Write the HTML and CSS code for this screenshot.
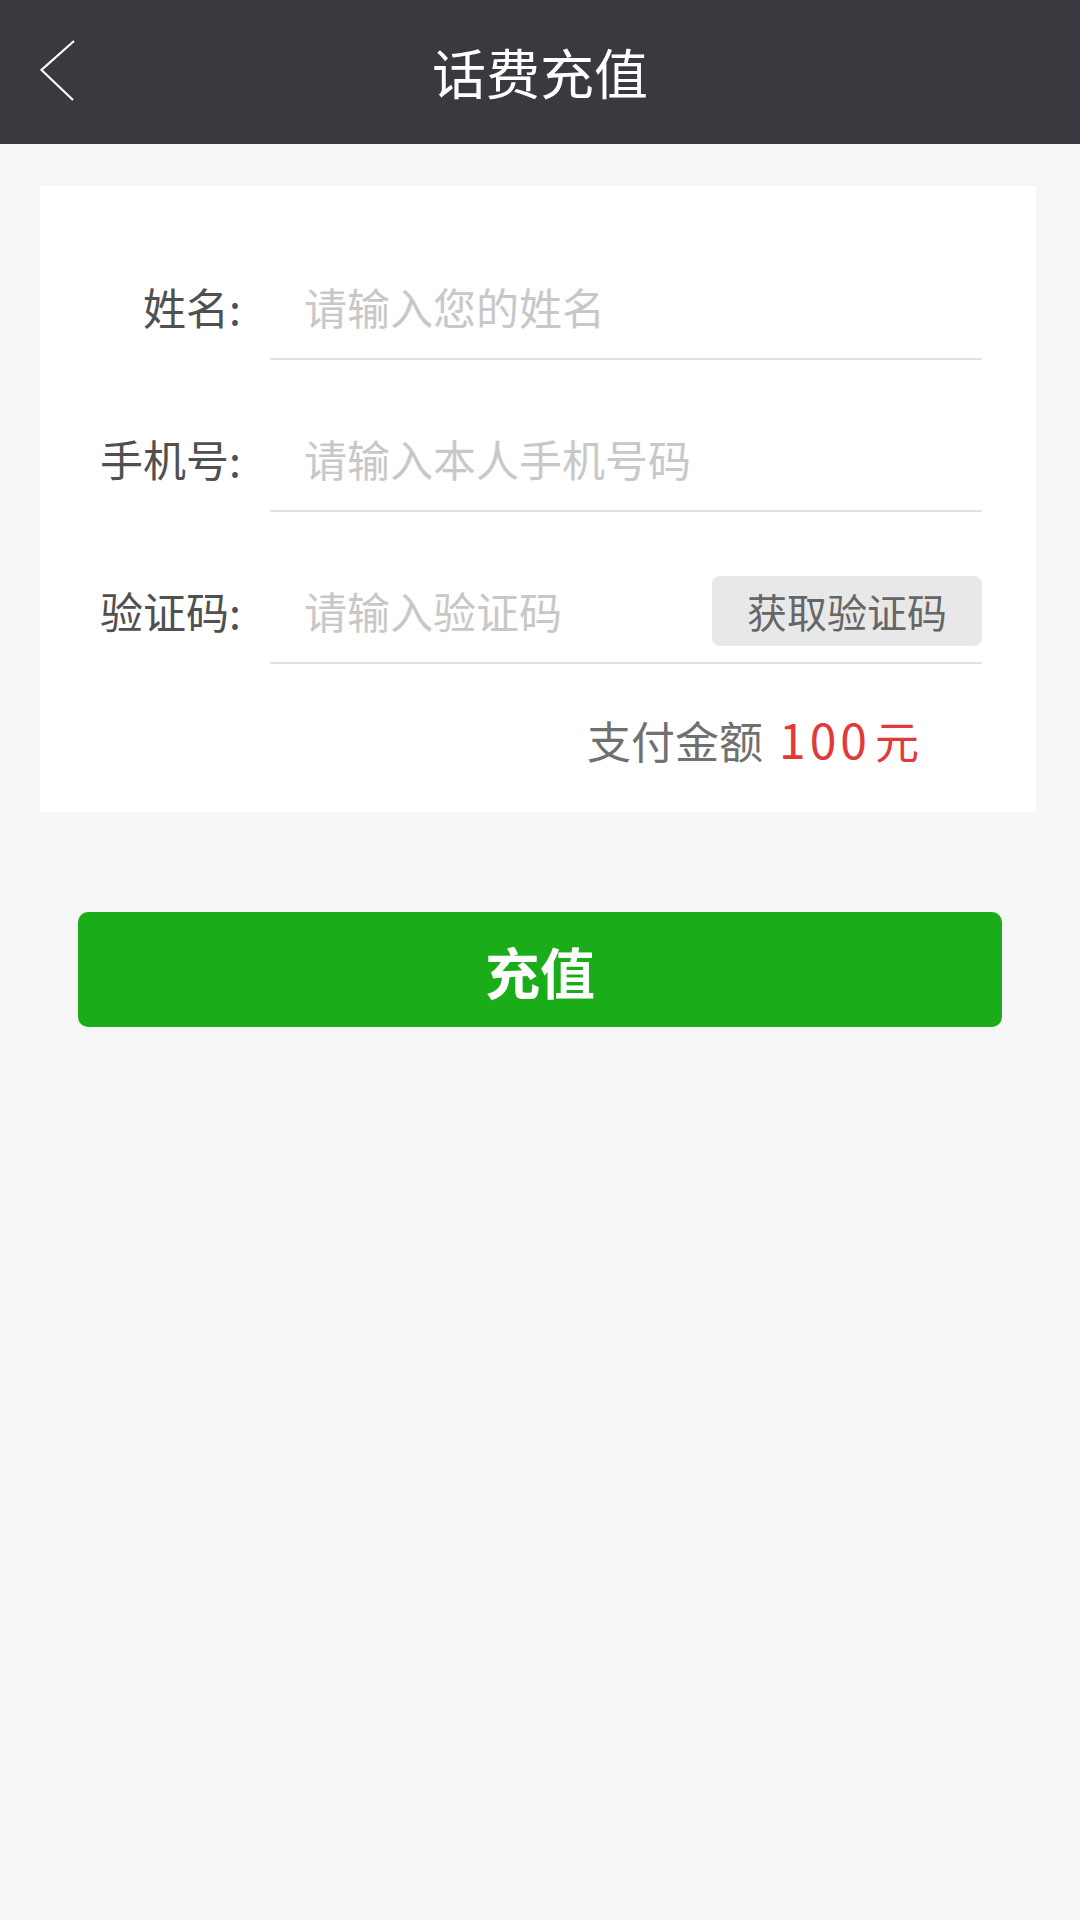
FILE: index.html
```html
<!DOCTYPE html>
<html lang="zh-CN">
<head>
<meta charset="utf-8">
<title>话费充值</title>
<link rel="stylesheet" href="styles.css">
</head>
<body>
<header class="topbar">
  <div class="topbar-left">
    <svg class="back-icon" width="36" height="66" viewBox="0 0 36 66" aria-hidden="true">
      <polyline points="34,3 1.5,32 33,62" fill="none" stroke="#ffffff" stroke-width="2.2" stroke-linejoin="miter"/>
    </svg>
  </div>
  <h1 class="topbar-title">话费充值</h1>
  <div class="topbar-right"></div>
</header>

<main class="content">
  <section class="card">
    <div class="form-row">
      <label class="form-label">姓名:</label>
      <div class="field">
        <input class="field-input" type="text" placeholder="请输入您的姓名">
      </div>
    </div>
    <div class="form-row">
      <label class="form-label">手机号:</label>
      <div class="field">
        <input class="field-input" type="text" placeholder="请输入本人手机号码">
      </div>
    </div>
    <div class="form-row">
      <label class="form-label">验证码:</label>
      <div class="field">
        <input class="field-input" type="text" placeholder="请输入验证码">
        <button class="code-btn" type="button">获取验证码</button>
      </div>
    </div>
    <div class="pay-row">
      <span class="pay-label">支付金额</span>
      <span class="pay-amount"><span class="pay-num">100</span><span class="pay-unit">元</span></span>
    </div>
  </section>

  <button class="submit-btn" type="button">充值</button>
</main>
</body>
</html>
```

FILE: styles.css
```css
* {
  box-sizing: border-box;
}

html, body {
  margin: 0;
  padding: 0;
}

body {
  width: 1080px;
  min-height: 1920px;
  background: #f6f6f6;
  font-family: "Noto Sans CJK SC", "Noto Sans", sans-serif;
}

.topbar {
  height: 144px;
  background: #393a3f;
  display: grid;
  grid-template-columns: 1fr auto 1fr;
  align-items: center;
}

.topbar-left {
  display: flex;
  align-items: center;
  padding-left: 40px;
}

.back-icon {
  display: block;
  margin-top: -2px;
}

.topbar-title {
  margin: 0;
  font-size: 54px;
  font-weight: 400;
  color: #ffffff;
  line-height: 1;
  letter-spacing: 0;
}

.content {
  padding-top: 42px;
}

.card {
  margin: 0 44px 0 40px;
  background: #ffffff;
  padding: 68px 54px 44px 0;
  display: flex;
  flex-direction: column;
  gap: 46px;
}

.form-row {
  display: flex;
  align-items: stretch;
}

.form-label {
  flex: 0 0 201px;
  width: 201px;
  margin-right: 29px;
  text-align: right;
  font-size: 43px;
  color: #505050;
  height: 104px;
  line-height: 104px;
  white-space: nowrap;
}

.field {
  flex: 1 1 auto;
  min-width: 0;
  height: 106px;
  border-bottom: 2px solid #e2e2e2;
  display: flex;
  align-items: center;
  padding-left: 34px;
}

.field-input {
  flex: 1 1 0;
  width: 0;
  min-width: 0;
  border: none;
  outline: none;
  background: transparent;
  font-family: "Noto Sans CJK SC", "Noto Sans", sans-serif;
  font-size: 43px;
  color: #333333;
  padding: 0;
  height: 60px;
}

.field-input::placeholder {
  color: #c8c8c8;
}

.code-btn {
  flex: 0 0 270px;
  width: 270px;
  height: 70px;
  border: none;
  border-radius: 8px;
  background: #e8e8e8;
  color: #666666;
  font-family: "Noto Sans CJK SC", "Noto Sans", sans-serif;
  font-size: 40px;
  padding: 0;
  margin-top: 2px;
}

.pay-row {
  display: flex;
  justify-content: flex-end;
  align-items: baseline;
  padding-right: 63px;
  margin-top: -2px;
  height: 60px;
  line-height: 60px;
}

.pay-label {
  font-size: 44px;
  color: #707070;
  margin-right: 16px;
}

.pay-amount {
  color: #e23a3a;
}

.pay-num {
  font-size: 48px;
  letter-spacing: 4px;
  margin-right: 4px;
}

.pay-unit {
  font-size: 44px;
}

.submit-btn {
  display: block;
  margin: 100px 78px 0 78px;
  width: 924px;
  height: 115px;
  border: none;
  border-radius: 10px;
  background: #1aad19;
  color: #ffffff;
  font-family: "Noto Sans CJK SC", "Noto Sans", sans-serif;
  font-size: 55px;
  font-weight: 700;
  padding: 0;
}
```
